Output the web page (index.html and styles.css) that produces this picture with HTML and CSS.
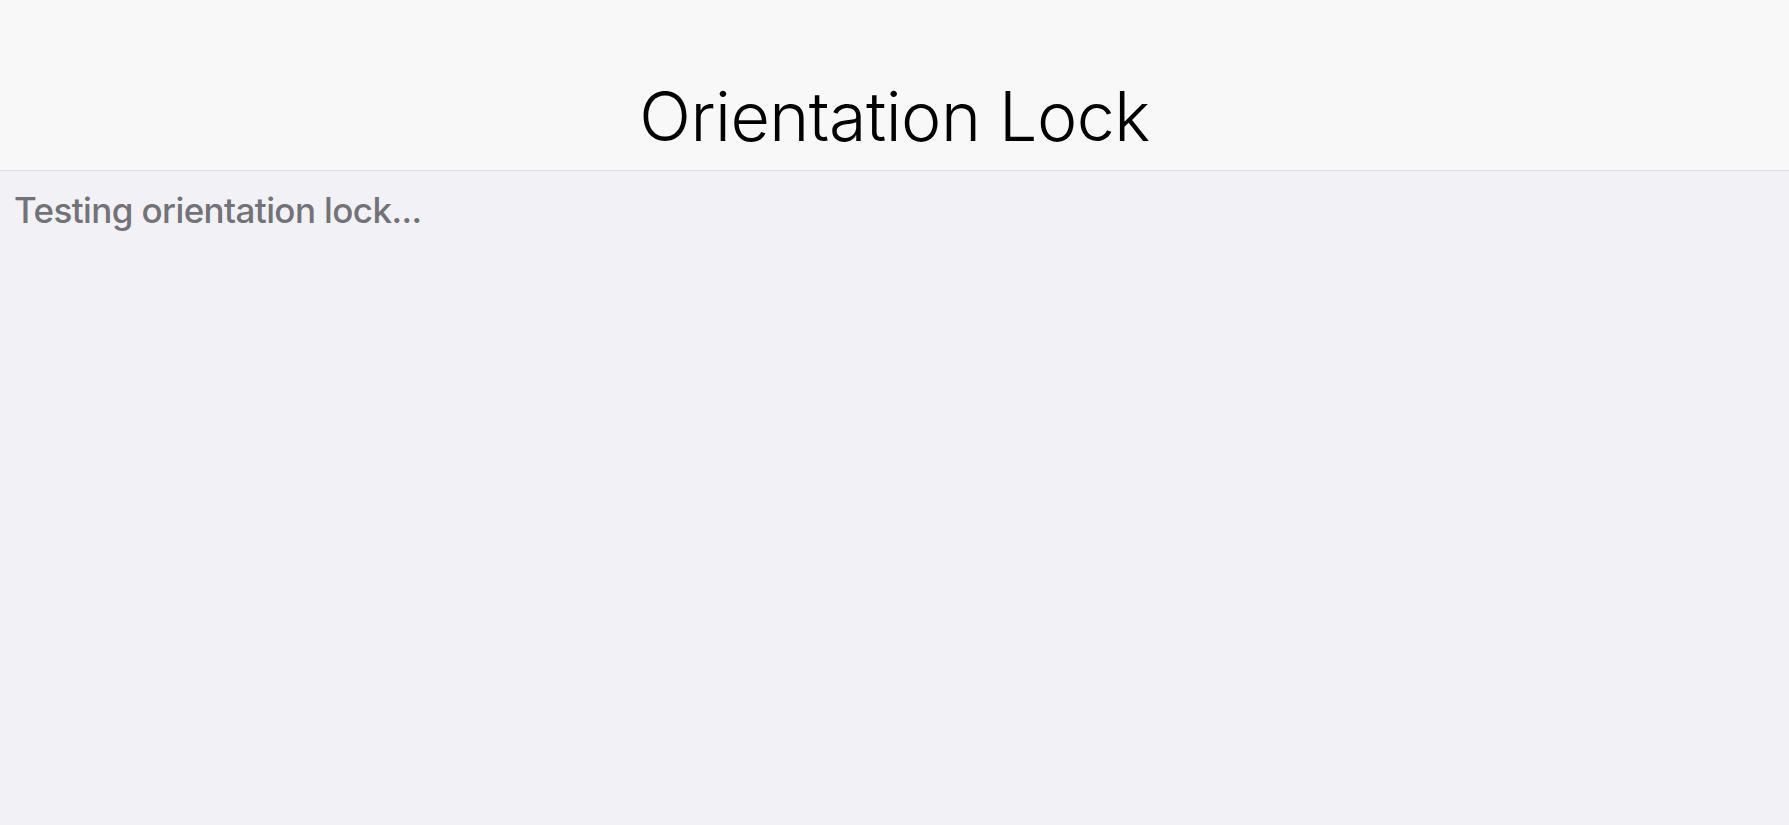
FILE: index.html
```html
<!DOCTYPE html>
<html lang="en">
<head>
    <meta charset="UTF-8">
    <meta name="viewport" content="width=device-width, initial-scale=1.0">
    <title>Orientation Lock</title>
    <link rel="stylesheet" href="styles.css">
</head>
<body>
    <header class="nav-bar">
        <h1 class="nav-title">Orientation Lock</h1>
    </header>
    <main class="content">
        <p class="status">Testing orientation lock...</p>
    </main>
</body>
</html>
```

FILE: styles.css
```css
html, body {
    height: 100%;
}
body {
    margin: 0;
    font-family: Inter, "Noto Sans", sans-serif;
    background-color: #f2f1f6;
}
.nav-bar {
    height: 171px;
    display: flex;
    align-items: flex-end;
    justify-content: center;
    background-color: #f8f8f8;
    border-bottom: 1px solid #dcdcdc;
    box-sizing: border-box;
}
.nav-title {
    margin: 0 0 20px;
    font-size: 68px;
    font-weight: 300;
    line-height: 1;
    color: #000;
    letter-spacing: -0.5px;
}
.content {
    padding: 0 14px;
}
.status {
    margin: 0;
    padding-top: 18px;
    font-size: 35px;
    font-weight: 500;
    line-height: 1.2;
    color: #737278;
    letter-spacing: -0.6px;
}
```
